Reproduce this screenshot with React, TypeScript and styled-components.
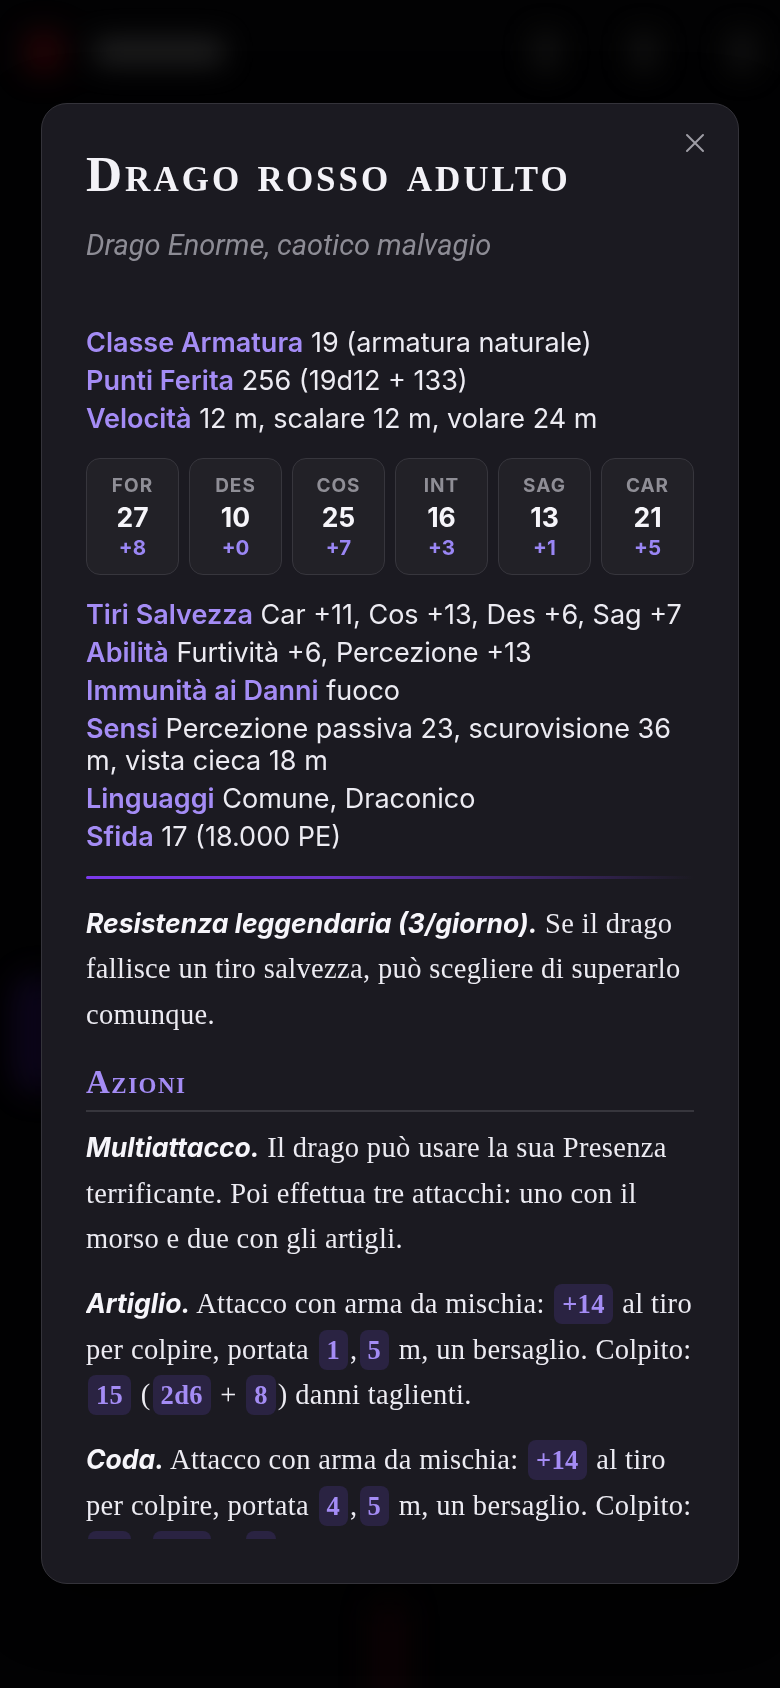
import React from "react";
import styled, { createGlobalStyle } from "styled-components";

const GlobalStyle = createGlobalStyle`
  html, body {
    margin: 0;
    padding: 0;
    background: #000;
  }
  body {
    font-family: Inter, "Liberation Sans", sans-serif;
    color: #ecebf2;
  }
`;

// pagina sfocata dietro al modale
const Backdrop = styled.div`
  width: 780px;
  height: 1688px;
  background: #020203;
  overflow: hidden;
`;

const BlurredPage = styled.div`
  filter: blur(14px);
  opacity: 0.55;
  display: flex;
  flex-direction: column;
  padding: 30px 24px;
`;

const FakeHeader = styled.div`
  display: flex;
  align-items: center;
  gap: 30px;
`;

const FakeLogo = styled.div`
  width: 40px;
  height: 44px;
  border-radius: 8px;
  background: #3a0508;
`;

const FakeTitle = styled.div`
  width: 130px;
  height: 26px;
  border-radius: 6px;
  background: #3a3a3a;
`;

const FakeSpacer = styled.div`
  flex: 1;
`;

const FakeIcon = styled.div`
  width: 28px;
  height: 40px;
  border-radius: 8px;
  background: #1d1d1d;
  margin-left: 40px;
`;

const FakeGlow = styled.div<{ $color: string; $w: number; $top: number; $left: number }>`
  width: ${(p) => p.$w}px;
  height: 120px;
  border-radius: 60px;
  background: ${(p) => p.$color};
  margin-top: ${(p) => p.$top}px;
  margin-left: ${(p) => p.$left}px;
`;

const Overlay = styled.div`
  position: fixed;
  inset: 0;
  display: flex;
  justify-content: center;
  padding-top: 103px;
`;

const Modal = styled.div`
  position: relative;
  width: 698px;
  height: 1481px;
  box-sizing: border-box;
  background: #1b1a21;
  border: 1px solid #34333a;
  border-radius: 26px;
  padding: 42px 44px 44px 44px;
  display: flex;
  flex-direction: column;
  box-shadow: 0 20px 60px rgba(0, 0, 0, 0.6);
`;

const CloseButton = styled.button`
  position: absolute;
  top: 24px;
  right: 28px;
  width: 30px;
  height: 30px;
  padding: 0;
  border: none;
  background: transparent;
  color: #9e9da5;
  display: flex;
  align-items: center;
  justify-content: center;
`;

const Scroll = styled.div`
  flex: 1;
  overflow-y: auto;
  scrollbar-width: none;
  &::-webkit-scrollbar {
    display: none;
  }
`;

const Title = styled.h1`
  margin: 0;
  font-family: "Liberation Serif", serif;
  font-variant: small-caps;
  font-weight: 700;
  font-size: 50px;
  line-height: 56px;
  letter-spacing: 3px;
  color: #f3f2f7;
`;

const Subtitle = styled.p`
  margin: 25px 0 0;
  font-family: Roboto, sans-serif;
  font-style: italic;
  font-size: 29px;
  line-height: 36px;
  color: #8d8c95;
`;

const Block = styled.div<{ $top: number }>`
  margin-top: ${(p) => p.$top}px;
  display: flex;
  flex-direction: column;
  gap: 5.4px;
`;

const Line = styled.div`
  font-family: Inter, sans-serif;
  font-size: 27px;
  line-height: 32.5px;
  color: #ecebf2;
`;

const Label = styled.span`
  color: #a48cf5;
  font-weight: 600;
`;

const Abilities = styled.div`
  display: grid;
  grid-template-columns: repeat(6, 1fr);
  gap: 10px;
  margin-top: 23px;
`;

const AbilityBox = styled.div`
  height: 117px;
  box-sizing: border-box;
  border: 1.5px solid #37363d;
  border-radius: 14px;
  background: #222127;
  display: flex;
  flex-direction: column;
  align-items: center;
  padding-top: 16px;
  font-family: Inter, sans-serif;
`;

const AbilityName = styled.div`
  font-size: 19px;
  font-weight: 700;
  color: #8f8e96;
  line-height: 22px;
  letter-spacing: 1px;
`;

const AbilityScore = styled.div`
  font-size: 26.5px;
  font-weight: 700;
  color: #f6f5fa;
  line-height: 32px;
  margin-top: 4px;
`;

const AbilityMod = styled.div`
  font-size: 20.5px;
  font-weight: 700;
  color: #9a86f4;
  line-height: 26px;
  margin-top: 2px;
`;

const Divider = styled.div`
  height: 3px;
  margin-top: 22px;
  border-radius: 2px;
  background: linear-gradient(90deg, #7c3aed 0%, #6d35c9 40%, rgba(124, 58, 237, 0) 100%);
`;

const Prose = styled.p<{ $top?: number }>`
  margin: ${(p) => p.$top ?? 19}px 0 0;
  font-family: "Liberation Serif", serif;
  font-size: 28.5px;
  letter-spacing: 0.35px;
  line-height: 45.7px;
  color: #ecebf2;
`;

const Feature = styled.span`
  font-family: Inter, sans-serif;
  font-style: italic;
  font-weight: 700;
  font-size: 26.5px;
  letter-spacing: 0;
  color: #f6f5fa;
`;

const SectionTitle = styled.h2`
  margin: 24px 0 0;
  font-family: "Liberation Serif", serif;
  font-variant: small-caps;
  font-weight: 700;
  font-size: 33px;
  line-height: 40px;
  letter-spacing: 1.5px;
  color: #a48cf5;
  padding-bottom: 8px;
  border-bottom: 2px solid #37363d;
`;

const Roll = styled.span`
  display: inline-block;
  padding: 0 8px;
  margin: 0 2px;
  border-radius: 8px;
  background: #2a2342;
  color: #a48cf5;
  font-weight: 700;
  font-size: 26.5px;
  line-height: 40px;
`;

const abilities = [
  { name: "FOR", score: 27, mod: "+8" },
  { name: "DES", score: 10, mod: "+0" },
  { name: "COS", score: 25, mod: "+7" },
  { name: "INT", score: 16, mod: "+3" },
  { name: "SAG", score: 13, mod: "+1" },
  { name: "CAR", score: 21, mod: "+5" },
];

const CloseIcon = () => (
  <svg width="24" height="24" viewBox="0 0 24 24" fill="none" stroke="currentColor" strokeWidth="2" strokeLinecap="round">
    <path d="M4 4l16 16M20 4L4 20" />
  </svg>
);

const App: React.FC = () => {
  return (
    <>
      <GlobalStyle />
      <Backdrop>
        <BlurredPage>
          <FakeHeader>
            <FakeLogo />
            <FakeTitle />
            <FakeSpacer />
            <FakeIcon />
            <FakeIcon />
            <FakeIcon />
          </FakeHeader>
          <FakeGlow $color="#1a0b3a" $w={50} $top={900} $left={-10} />
          <FakeGlow $color="#150306" $w={40} $top={500} $left={345} />
        </BlurredPage>
      </Backdrop>

      <Overlay>
        <Modal>
          <CloseButton aria-label="Chiudi">
            <CloseIcon />
          </CloseButton>
          <Scroll>
            <Title>Drago rosso adulto</Title>
            <Subtitle>Drago Enorme, caotico malvagio</Subtitle>

            <Block $top={64}>
              <Line><Label>Classe Armatura</Label> 19 (armatura naturale)</Line>
              <Line><Label>Punti Ferita</Label> 256 (19d12 + 133)</Line>
              <Line><Label>Velocità</Label> 12 m, scalare 12 m, volare 24 m</Line>
            </Block>

            <Abilities>
              {abilities.map((a) => (
                <AbilityBox key={a.name}>
                  <AbilityName>{a.name}</AbilityName>
                  <AbilityScore>{a.score}</AbilityScore>
                  <AbilityMod>{a.mod}</AbilityMod>
                </AbilityBox>
              ))}
            </Abilities>

            <Block $top={24}>
              <Line><Label>Tiri Salvezza</Label> Car +11, Cos +13, Des +6, Sag +7</Line>
              <Line><Label>Abilità</Label> Furtività +6, Percezione +13</Line>
              <Line><Label>Immunità ai Danni</Label> fuoco</Line>
              <Line><Label>Sensi</Label> Percezione passiva 23, scurovisione 36 m, vista cieca 18 m</Line>
              <Line><Label>Linguaggi</Label> Comune, Draconico</Line>
              <Line><Label>Sfida</Label> 17 (18.000 PE)</Line>
            </Block>

            <Divider />

            <Prose $top={22}>
              <Feature>Resistenza leggendaria (3/giorno).</Feature> Se il drago fallisce un tiro salvezza, può scegliere di superarlo comunque.
            </Prose>

            <SectionTitle>Azioni</SectionTitle>

            <Prose $top={13}>
              <Feature>Multiattacco.</Feature> Il drago può usare la sua Presenza terrificante. Poi effettua tre attacchi: uno con il morso e due con gli artigli.
            </Prose>
            <Prose>
              <Feature>Artiglio.</Feature> Attacco con arma da mischia: <Roll>+14</Roll> al tiro per colpire, portata <Roll>1</Roll>,<Roll>5</Roll> m, un bersaglio. Colpito: <Roll>15</Roll> (<Roll>2d6</Roll> + <Roll>8</Roll>) danni taglienti.
            </Prose>
            <Prose>
              <Feature>Coda.</Feature> Attacco con arma da mischia: <Roll>+14</Roll> al tiro per colpire, portata <Roll>4</Roll>,<Roll>5</Roll> m, un bersaglio. Colpito: <Roll>17</Roll> (<Roll>2d8</Roll> + <Roll>8</Roll>) danni contundenti.
            </Prose>
            <Prose>
              <Feature>Morso.</Feature> Attacco con arma da mischia: <Roll>+14</Roll> al tiro per colpire, portata <Roll>3</Roll> m, un bersaglio. Colpito: <Roll>19</Roll> (<Roll>2d10</Roll> + <Roll>8</Roll>) danni perforanti più <Roll>7</Roll> (<Roll>2d6</Roll>) danni da fuoco.
            </Prose>
          </Scroll>
        </Modal>
      </Overlay>
    </>
  );
};

export default App;
